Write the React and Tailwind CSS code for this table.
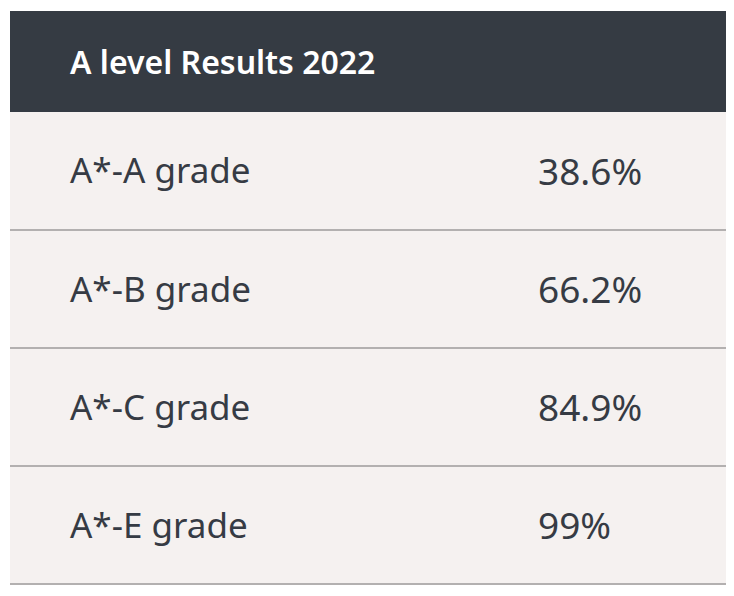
import React from 'react';

const results = [
  { label: 'A*-A grade', value: '38.6%' },
  { label: 'A*-B grade', value: '66.2%' },
  { label: 'A*-C grade', value: '84.9%' },
  { label: 'A*-E grade', value: '99%' },
];

const App = () => {
  return (
    <div className="bg-white min-h-screen pt-[11px] px-[10px] font-['Noto_Sans',sans-serif]">
      <table className="w-[716px] border-collapse">
        <thead>
          <tr className="bg-[#353b43]">
            <th
              colSpan={2}
              className="h-[101px] pl-[60px] text-left text-[32px] font-semibold text-white"
            >
              A level Results 2022
            </th>
          </tr>
        </thead>
        <tbody>
          {results.map((row) => (
            <tr key={row.label} className="bg-[#f5f1f0] border-b-2 border-[#b3b0b0]">
              <td className="h-[118px] pl-[60px] w-[528px] text-[35px] text-[#363b44]">
                {row.label}
              </td>
              <td className="text-[37px] text-[#363b44]">{row.value}</td>
            </tr>
          ))}
        </tbody>
      </table>
    </div>
  );
};

export default App;
